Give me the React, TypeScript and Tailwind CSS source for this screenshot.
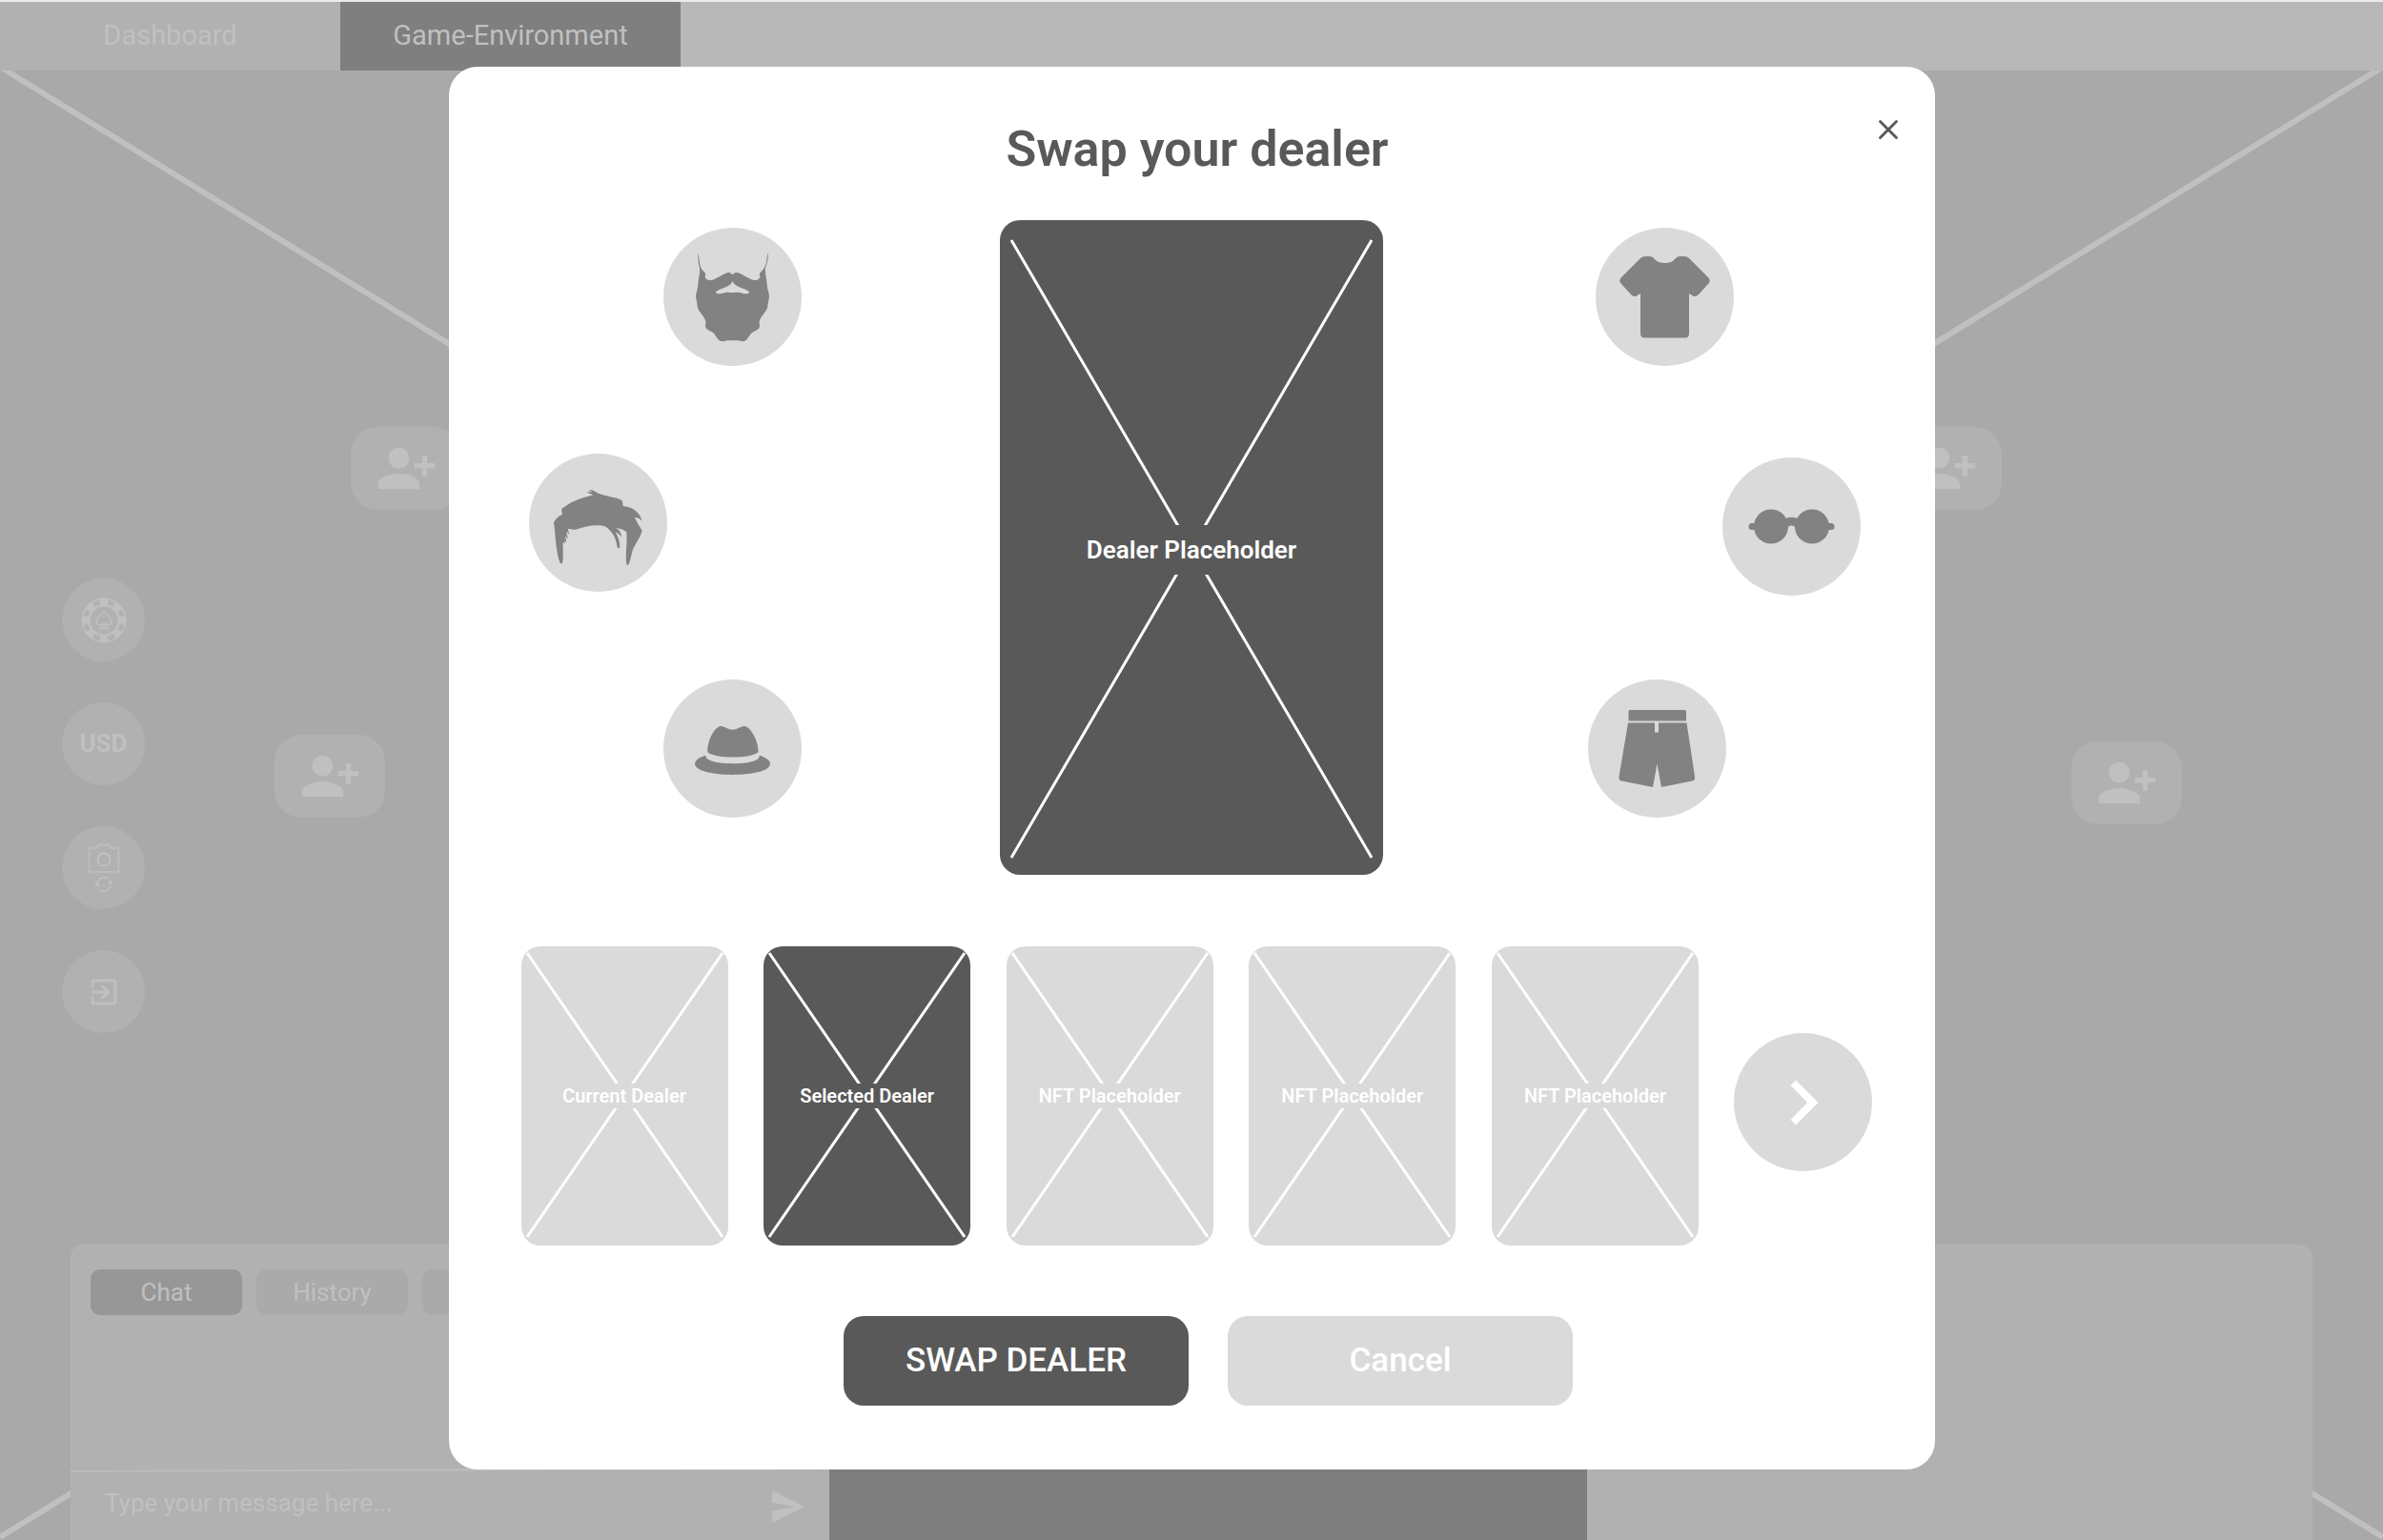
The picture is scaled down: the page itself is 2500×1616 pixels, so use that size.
import React, { useState } from "react";
import { X } from "lucide-react";
import { MdExitToApp, MdPersonAddAlt1 } from "react-icons/md";

const dealers = [
  "Current Dealer",
  "Selected Dealer",
  "NFT Placeholder",
  "NFT Placeholder",
  "NFT Placeholder",
];

const seats = [
  "left-[368px] top-[374px]",
  "left-[288px] top-[697px]",
  "right-[400px] top-[374px]",
  "right-[211px] top-[704px]",
];

const BeardIcon = () => (
  <svg viewBox="464 56 434 434" className="size-full" fill="currentColor">
    <path
      fillRule="evenodd"
      d="M574 136C571 152 574 170 578 184C579 204 573 218 572 240C571 254 565 262 566 273C567 284 570 290 571 305C576 322 592 332 597 350C598 358 593 364 598 372C606 381 619 382 625 391C632 400 636 412 650 413C657 413 657 410 665 410H697C705 410 705 413 712 413C726 412 730 400 737 391C743 382 756 381 764 372C769 364 764 358 765 350C770 332 786 322 791 305C792 290 795 284 796 273C797 262 791 254 790 240C789 218 783 204 784 184C788 170 795 152 792 136C787 152 790 172 778 186C773 193 764 196 766 205C769 211 767 215 760 219C748 225 732 215 718 207C708 201 701 197 692 197C686 197 685 203 681 203C677 203 676 197 670 197C661 197 654 201 644 207C630 215 614 225 602 219C595 215 593 211 596 205C598 196 589 193 584 186C576 172 577 152 574 136ZM681 223C676 242 646 244 630 256C627 261 632 264 640 263C652 263 655 258 668 259C676 260 686 260 694 259C707 258 710 263 722 263C730 264 735 261 732 256C716 244 686 242 681 223Z"
    />
  </svg>
);

const HairIcon = () => (
  <svg viewBox="44 46 434 434" className="size-full" fill="currentColor">
    <path d="M122 262C128 250 138 241 149 237C147 231 145 225 147 219C172 200 205 183 245 177C238 174 233 168 227 169C231 165 237 166 243 168C240 163 236 162 231 162C238 156 250 165 262 171C286 181 314 182 333 191C341 197 336 205 341 211C371 213 394 233 399 258C392 250 385 247 376 246C382 262 391 273 399 288C392 318 372 332 366 362C363 376 360 388 356 395Q353 398 350 393C346 360 353 330 350 292C341 284 328 282 315 279C327 284 333 294 335 309C329 301 324 295 315 292C324 305 329 320 329 341Q325 344 321 341C319 315 306 290 285 276C257 266 222 275 195 283C184 286 174 284 166 282C166 289 170 293 171 299C167 297 165 294 163 290C160 300 167 306 165 313C162 311 160 308 158 305C156 312 163 317 161 324C159 322 157 320 155 318C154 322 158 324 157 328L150 325C150 345 153 370 149 389Q146 394 141 389C128 350 128 310 122 262Z" />
    <path
      d="M228 168C235 164 248 175 260 176"
      fill="none"
      stroke="currentColor"
      strokeWidth="3"
    />
  </svg>
);

const HatIcon = () => (
  <svg viewBox="464 758 434 434" className="size-full" fill="currentColor">
    <path d="M602 986C602 952 620 915 638 906C652 900 662 915 681 916C700 915 710 900 724 906C742 915 762 952 762 986C745 998 715 1002 681 1002C648 1002 620 998 602 986Z" />
    <path d="M596 997Q597 1003 602 1008C620 1019 650 1022 681 1022C715 1022 745 1019 760 1008Q766 1003 766 997C785 1003 799 1012 799 1023C799 1045 745 1057 681 1057C618 1057 563 1045 563 1023C563 1012 578 1002 596 997Z" />
  </svg>
);

const ShirtIcon = () => (
  <svg viewBox="0 0 145 145" className="size-full" fill="currentColor">
    <path d="M52 30H57Q60 30 62 33Q65 37 72.500 37Q80 37 83 33Q85 30 88 30H93Q96 30 98 32L118 52Q121.500 56 118 59L108 70Q105.500 73 102 71.500L98 69V111Q98 115.500 93.500 115.500H51.500Q47 115.500 47 111V69L43 71.500Q39.500 73 37 70L27 59Q23.500 56 27 52L47 32Q49 30 52 30Z" />
  </svg>
);

const GlassesIcon = () => (
  <svg viewBox="0 0 145 145" className="size-full" fill="currentColor">
    <circle cx="51" cy="72.5" r="18" />
    <circle cx="94" cy="72.5" r="18" />
    <path d="M31 69H36V76H31Q27.500 76 27.500 72.500T31 69ZM114 69H109V76H114Q117.500 76 117.500 72.500T114 69Z" />
    <path d="M64 65Q72.500 60.500 81 65L77 76Q77 71.500 72.500 71.500T68 76Z" />
  </svg>
);

const ShortsIcon = () => (
  <svg viewBox="0 0 145 145" className="size-full" fill="currentColor">
    <path d="M44 32H101.500Q103 32 103 34V43.500H42.500V34Q42.500 32 44 32Z" />
    <path d="M42 45.500H70V55.500H74V45.500H103.500L112 102Q112.500 106 109 106.500L77 113L72.500 88.500L68 113L35.500 106.500Q32 106 32.500 102Z" />
  </svg>
);

const ChipIcon = () => (
  <svg viewBox="0 0 48 48" width="48" height="48" fill="none">
    <circle cx="24" cy="24" r="19" stroke="currentColor" strokeWidth="9" />
    <g stroke="#b1b1b1" strokeWidth="5">
      {[22.5, 67.5, 112.5, 157.5, 202.5, 247.5, 292.5, 337.5].map((deg) => (
        <path key={deg} d="M43.500 20.500V27.500" transform={`rotate(${deg} 24 24)`} />
      ))}
    </g>
    <path
      d="M24 14.500C22 18 16 20.500 16 25C16 29 21 30 23 27C23 30 21.500 31.500 19 32.500H29C26.500 31.500 25 30 25 27C27 30 32 29 32 25C32 20.500 26 18 24 14.500Z"
      stroke="currentColor"
      strokeWidth="1.5"
      strokeLinejoin="round"
    />
  </svg>
);

const CameraSwapIcon = () => (
  <svg viewBox="0 0 34 52" width="34" height="52" fill="none" stroke="currentColor">
    <path
      d="M4 5H8.500C10.500 5 10.500 1.500 13 1.500H21C23.500 1.500 23.500 5 25.500 5H30Q32.500 5 32.500 7.500V27.500Q32.500 30 30 30H4Q1.500 30 1.500 27.500V7.500Q1.500 5 4 5Z"
      strokeWidth="1.5"
    />
    <circle cx="17" cy="17" r="6.500" strokeWidth="2" />
    <path d="M10 42A7.500 7 0 0 1 21.500 37M24 44A7.500 7 0 0 1 12.500 49" strokeWidth="1.500" />
    <path d="M6.500 44.500L10 40.500L13.500 44.500ZM20.500 42.500L24 38.500L27.500 42.500Z" fill="currentColor" stroke="none" />
  </svg>
);

const leftItems = [
  { name: "Beard", Icon: BeardIcon, place: "self-end" },
  { name: "Hair", Icon: HairIcon, place: "self-start mt-23" },
  { name: "Hat", Icon: HatIcon, place: "self-end mt-23" },
];

const rightItems = [
  { name: "Shirt", Icon: ShirtIcon, place: "self-start ml-2" },
  { name: "Glasses", Icon: GlassesIcon, place: "self-end mt-24" },
  { name: "Shorts", Icon: ShortsIcon, place: "self-start mt-22" },
];

type Item = { name: string; Icon: React.FC; place: string };

const ItemColumn: React.FC<{ items: Item[] }> = ({ items }) => (
  <div className="flex w-[286px] flex-col">
    {items.map(({ name, Icon, place }) => (
      <button
        key={name}
        aria-label={name}
        className={`size-[145px] cursor-pointer rounded-full bg-[#dadada] text-[#828282] ${place}`}
      >
        <Icon />
      </button>
    ))}
  </div>
);

const SideButton: React.FC<{ label: string; children: React.ReactNode }> = ({
  label,
  children,
}) => (
  <button
    aria-label={label}
    className="flex size-[87px] cursor-pointer items-center justify-center rounded-full bg-[#b1b1b1] text-[26px] font-bold"
  >
    {children}
  </button>
);

const GameTable: React.FC = () => (
  <div className="relative flex min-h-screen flex-col bg-[#a9a9a9] text-[26px] text-[#c0c0c0]">
    <svg
      className="absolute inset-0 size-full"
      viewBox="0 0 2500 1616"
      preserveAspectRatio="none"
      stroke="#c0c0c0"
      strokeWidth="6"
    >
      <path d="M0 70L2500 1613M2500 70L0 1613" />
    </svg>

    <nav className="relative flex h-[74px] border-t-2 border-[#ececec] bg-[#b8b8b8] text-[29px]">
      <a href="#dashboard" className="flex w-[357px] items-center justify-center bg-[#b1b1b1]">
        Dashboard
      </a>
      <a href="#game" className="flex w-[357px] items-center justify-center bg-[#7f7f7f]">
        Game-Environment
      </a>
    </nav>

    <main className="relative flex-1">
      {seats.map((seat) => (
        <button
          key={seat}
          aria-label="Add player"
          className={`absolute flex h-[87px] w-[116px] cursor-pointer items-center justify-center rounded-[28px] bg-[#b1b1b1] ${seat}`}
        >
          <MdPersonAddAlt1 size={65} />
        </button>
      ))}
      <div className="flex w-fit flex-col gap-[43px] pt-[533px] pl-[65px]">
        <SideButton label="Chips">
          <ChipIcon />
        </SideButton>
        <SideButton label="Currency">USD</SideButton>
        <SideButton label="Swap camera">
          <CameraSwapIcon />
        </SideButton>
        <SideButton label="Leave table">
          <MdExitToApp size={36} />
        </SideButton>
      </div>
    </main>

    <footer className="relative flex h-[310px] px-[74px]">
      <section className="flex w-[796px] flex-col rounded-tl-[13px] bg-[#b1b1b1]">
        <div className="flex flex-1 items-start gap-[15px] px-[21px] pt-[26px]">
          <button className="h-12 w-[159px] cursor-pointer rounded-[10px] bg-[#979797]">Chat</button>
          <button className="h-12 w-[159px] cursor-pointer rounded-[10px] bg-[#aaaaaa]">History</button>
          <button aria-label="More" className="h-12 w-[159px] cursor-pointer rounded-[10px] bg-[#aaaaaa]" />
        </div>
        <svg className="h-1 w-full" viewBox="0 0 796 4" preserveAspectRatio="none">
          <path d="M0 3L796 0" stroke="#bdbdbd" strokeWidth="2" />
        </svg>
        <form className="flex h-[71px] items-center pr-[26px] pl-9">
          <input
            type="text"
            aria-label="Message"
            placeholder="Type your message here..."
            className="h-12 min-w-0 flex-1 bg-transparent pb-2 outline-none placeholder:text-[#c0c0c0]"
          />
          <button type="button" aria-label="Send" className="cursor-pointer">
            <svg viewBox="0 0 34 34" width="34" height="34" fill="currentColor">
              <path d="M0 0L34 17L0 34V21.500L24 17L0 13Z" />
            </svg>
          </button>
        </form>
      </section>
      <section className="w-[795px] bg-[#7e7e7e]" />
      <section className="flex-1 rounded-tr-[13px] bg-[#b1b1b1]" />
    </footer>
  </div>
);

const App: React.FC = () => {
  const [selected, setSelected] = useState(1);

  return (
    <div className="relative font-[Roboto,sans-serif]">
      <GameTable />

      <div className="absolute inset-0 overflow-y-auto pt-[70px]">
        <div
          role="dialog"
          aria-labelledby="swap-title"
          className="relative mx-auto w-full max-w-[1559px] rounded-[30px] bg-white pt-[57px] pb-[67px]"
        >
          <button
            aria-label="Close"
            className="absolute top-[49px] right-8 cursor-pointer text-[#595959]"
          >
            <X size={34} />
          </button>

          <h1
            id="swap-title"
            className="mb-11 pl-3 text-center text-[52px] leading-[60px] font-semibold text-[#595959]"
          >
            Swap your dealer
          </h1>

          <div className="grid grid-cols-[1fr_auto_1fr]">
            <div className="flex justify-start pt-2 pl-[84px]">
              <ItemColumn items={leftItems} />
            </div>
            <div className="relative flex h-[687px] w-[402px] items-center rounded-[21px] bg-[#595959] pt-1">
              <svg className="absolute inset-0 size-full" viewBox="0 0 402 687" stroke="white" strokeWidth="3">
                <path d="M12 21L390 669M390 21L12 669" />
              </svg>
              <p className="relative w-full bg-[#595959] text-center text-[26px] leading-[52px] font-semibold text-white">
                Dealer Placeholder
              </p>
            </div>
            <div className="flex justify-end pt-2 pr-[78px]">
              <ItemColumn items={rightItems} />
            </div>
          </div>

          <div className="mt-[75px] flex items-center justify-between pr-[65px] pl-[76px]">
            {dealers.map((dealer, idx) => (
              <button
                key={idx}
                onClick={() => setSelected(idx)}
                className={`relative flex h-[314px] w-[217px] cursor-pointer items-center rounded-[20px] ${
                  idx === selected ? "bg-[#595959]" : "bg-[#dadada]"
                }`}
              >
                <svg className="absolute inset-0 size-full" viewBox="0 0 217 314" stroke="white" strokeWidth="3">
                  <path d="M6 7L211 305M211 7L6 305" />
                </svg>
                <span className="relative w-full bg-inherit text-[20px] leading-[26px] font-semibold text-white">
                  {dealer}
                </span>
              </button>
            ))}
            <button
              aria-label="Next dealers"
              className="mt-3 size-[145px] cursor-pointer rounded-full bg-[#dadada] text-white"
            >
              <svg viewBox="0 0 145 145" className="size-full" fill="currentColor">
                <path d="M65 49.500L88.500 73L65 96.500L59.500 91L77 73L59.500 55Z" />
              </svg>
            </button>
          </div>

          <div className="mt-[74px] flex justify-center gap-[41px] pl-[35px] text-[35px] font-medium text-white">
            <button className="h-[94px] w-[362px] cursor-pointer rounded-[21px] bg-[#595959]">
              SWAP DEALER
            </button>
            <button className="h-[94px] w-[362px] cursor-pointer rounded-[21px] bg-[#dadada]">
              Cancel
            </button>
          </div>
        </div>
      </div>
    </div>
  );
};

export default App;
